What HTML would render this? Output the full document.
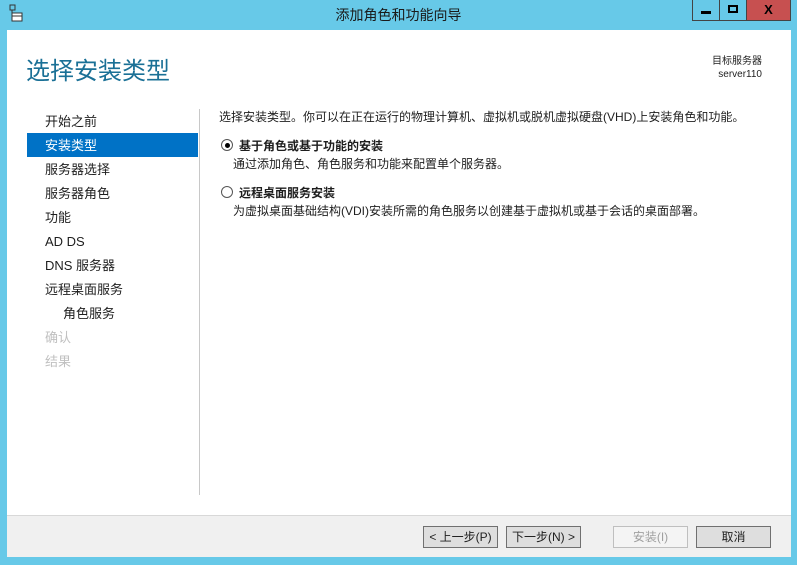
<!DOCTYPE html>
<html><head><meta charset="utf-8"><style>
*{margin:0;padding:0;box-sizing:border-box}
body{width:797px;height:565px;background:#67c9e8;position:relative;overflow:hidden;font-family:"Liberation Sans","Noto Sans CJK SC",sans-serif;font-size:12px;color:#1e1e1e}
.abs{position:absolute;white-space:nowrap}
#client{position:absolute;left:7px;top:30px;width:784px;height:527px;background:#fff}
#foot{position:absolute;left:7px;top:515px;width:784px;height:42px;background:#f0f0f0;border-top:1px solid #d8d8d8}
.btn{position:absolute;top:526px;height:22px;width:75px;border:1px solid #707070;background:#dedede;text-align:center;line-height:20px;font-size:12px}
.nav{position:absolute;left:45px;font-size:13px;line-height:24px}
.radio{position:absolute;left:221px;width:12px;height:12px;border:1px solid #555;border-radius:50%;background:#fff}
</style></head><body>
<svg class="abs" style="left:9px;top:4px" width="14" height="18" viewBox="0 0 14 18"><rect x="1" y="1" width="5" height="5" fill="none" stroke="#333"/><line x1="3" y1="6" x2="3" y2="12" stroke="#333"/><rect x="3" y="9" width="10" height="8" fill="#fff" stroke="#333"/><line x1="3" y1="12" x2="13" y2="12" stroke="#333"/></svg>
<div class="abs" style="left:0;width:797px;top:5px;text-align:center;font-size:14px;color:#1a1a1a">添加角色和功能向导</div>
<div class="abs" style="left:692px;top:0;width:28px;height:21px;border:1px solid #444;border-top:none;background:#67c9e8"><div style="position:absolute;left:8px;top:11px;width:10px;height:3px;background:#000"></div></div>
<div class="abs" style="left:719px;top:0;width:28px;height:21px;border:1px solid #444;border-top:none;background:#67c9e8"><div style="position:absolute;left:8px;top:5px;width:10px;height:8px;border:2px solid #000"></div></div>
<div class="abs" style="left:746px;top:0;width:45px;height:21px;border:1px solid #444;border-top:none;background:#c75050;text-align:center;font-weight:bold;font-size:13px;line-height:19px;color:#000">X</div>
<div id="client"></div>
<div class="abs" style="left:26px;top:51px;font-size:24px;color:#1a7096">选择安装类型</div>
<div class="abs" style="right:35px;top:55px;font-size:10px;text-align:right;line-height:13px">目标服务器<br>server110</div>
<div class="nav" style="left:27px;top:133px;width:171px;height:24px;background:#0072c6"></div>
<div class="nav" style="top:110px">开始之前</div>
<div class="nav" style="top:134px;color:#fff">安装类型</div>
<div class="nav" style="top:158px">服务器选择</div>
<div class="nav" style="top:182px">服务器角色</div>
<div class="nav" style="top:206px">功能</div>
<div class="nav" style="top:230px">AD DS</div>
<div class="nav" style="top:254px">DNS 服务器</div>
<div class="nav" style="top:278px">远程桌面服务</div>
<div class="nav" style="top:302px;left:63px">角色服务</div>
<div class="nav" style="top:326px;color:#c0c0c0">确认</div>
<div class="nav" style="top:350px;color:#c0c0c0">结果</div>
<div class="abs" style="left:199px;top:109px;width:1px;height:386px;background:#c8c8c8"></div>
<div class="abs" style="left:219px;top:108px">选择安装类型。你可以在正在运行的物理计算机、虚拟机或脱机虚拟硬盘(VHD)上安装角色和功能。</div>
<div class="radio" style="top:139px"><div style="position:absolute;left:2.5px;top:2.5px;width:5px;height:5px;border-radius:50%;background:#000"></div></div>
<div class="abs" style="left:239px;top:137px;font-weight:bold">基于角色或基于功能的安装</div>
<div class="abs" style="left:233px;top:155px">通过添加角色、角色服务和功能来配置单个服务器。</div>
<div class="radio" style="top:186px"></div>
<div class="abs" style="left:239px;top:184px;font-weight:bold">远程桌面服务安装</div>
<div class="abs" style="left:233px;top:202px">为虚拟桌面基础结构(VDI)安装所需的角色服务以创建基于虚拟机或基于会话的桌面部署。</div>
<div id="foot"></div>
<div class="btn" style="left:423px">&lt; 上一步(P)</div>
<div class="btn" style="left:506px">下一步(N) &gt;</div>
<div class="btn" style="left:613px;background:#f4f4f4;border-color:#bfbfbf;color:#a0a0a0">安装(I)</div>
<div class="btn" style="left:696px">取消</div>
</body></html>
